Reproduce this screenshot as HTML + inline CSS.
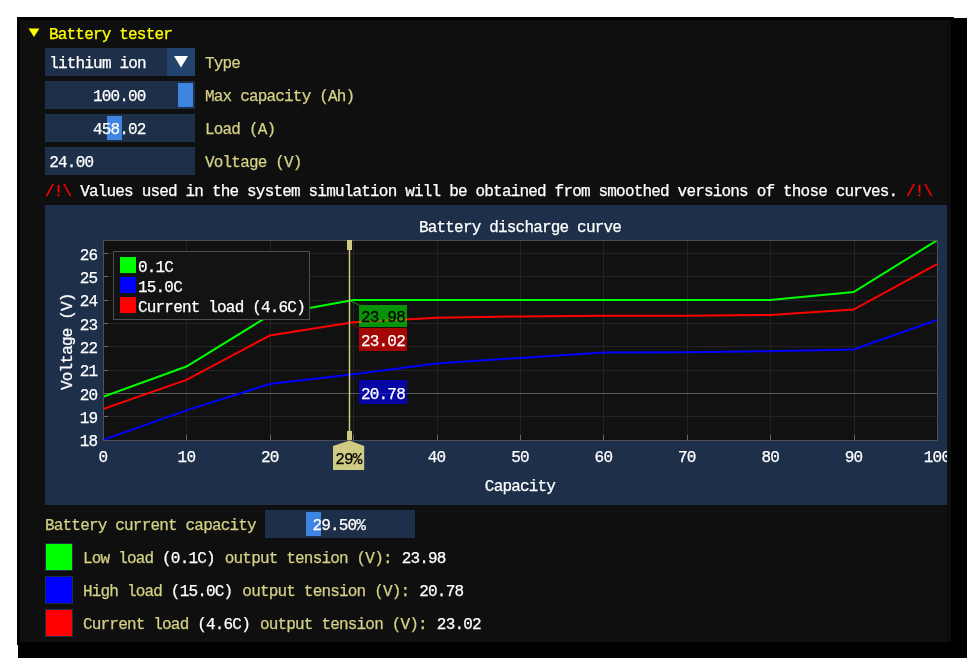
<!DOCTYPE html>
<html><head><meta charset="utf-8"><style>
html,body{margin:0;padding:0;background:#fff;width:971px;height:662px;overflow:hidden}
svg{display:block;will-change:transform}
text{font-family:"Liberation Mono",monospace;font-size:16px;letter-spacing:-0.815px;white-space:pre;stroke-width:0.25px}
</style></head><body>
<svg width="971" height="662" viewBox="0 0 971 662">
<rect x="0" y="0" width="971" height="662" fill="#ffffff" />
<rect x="18" y="18" width="949" height="640" fill="#000000" />
<rect x="17" y="17" width="937" height="628" fill="#000000" />
<rect x="20" y="20" width="931" height="622" fill="#0f0f0f" />
<rect x="947" y="20" width="4" height="622" fill="#0d0d0d" />
<polygon points="28.50,28.50 39.40,28.50 34.00,37.00" fill="#ffff00" />
<text x="49.00" y="39.20" fill="#ffff00" stroke="#ffff00" >Battery tester</text>
<rect x="45" y="48" width="122" height="28" fill="#1e2f4a" />
<rect x="167" y="48" width="28" height="28" fill="#23456d" />
<polygon points="174.00,56.00 188.00,56.00 181.00,67.50" fill="#ffffff" />
<text x="49.20" y="68.30" fill="#ffffff" stroke="#ffffff" >lithium ion</text>
<text x="205.00" y="68.30" fill="#d4d086" stroke="#d4d086" >Type</text>
<rect x="45" y="81" width="150" height="28" fill="#1e2f4a" />
<rect x="178" y="83" width="15" height="24" fill="#3d85e0" />
<text x="92.94" y="101.30" fill="#ffffff" stroke="#ffffff" >100.00</text>
<text x="205.00" y="101.30" fill="#d4d086" stroke="#d4d086" >Max capacity (Ah)</text>
<rect x="45" y="114" width="150" height="28" fill="#1e2f4a" />
<rect x="107" y="116" width="15" height="24" fill="#3d85e0" />
<text x="92.94" y="134.30" fill="#ffffff" stroke="#ffffff" >458.02</text>
<text x="205.00" y="134.30" fill="#d4d086" stroke="#d4d086" >Load (A)</text>
<rect x="45" y="147" width="150" height="28" fill="#1e2f4a" />
<text x="49.30" y="167.30" fill="#ffffff" stroke="#ffffff" >24.00</text>
<text x="205.00" y="167.30" fill="#d4d086" stroke="#d4d086" >Voltage (V)</text>
<text x="45.00" y="196.30" fill="#ff0000" stroke="#ff0000" >/!\</text>
<text x="80.14" y="196.30" fill="#ffffff" stroke="#ffffff" >Values used in the system simulation will be obtained from smoothed versions of those curves.</text>
<text x="906.03" y="196.30" fill="#ff0000" stroke="#ff0000" >/!\</text>
<rect x="45" y="205" width="902" height="300" fill="#1e2f4a" />
<rect x="103" y="240" width="834" height="200" fill="#111111" />
<line x1="186.5" y1="240" x2="186.5" y2="440" stroke="#232323" stroke-width="1"/>
<line x1="270.5" y1="240" x2="270.5" y2="440" stroke="#232323" stroke-width="1"/>
<line x1="353.5" y1="240" x2="353.5" y2="440" stroke="#232323" stroke-width="1"/>
<line x1="437.5" y1="240" x2="437.5" y2="440" stroke="#232323" stroke-width="1"/>
<line x1="520.5" y1="240" x2="520.5" y2="440" stroke="#232323" stroke-width="1"/>
<line x1="603.5" y1="240" x2="603.5" y2="440" stroke="#232323" stroke-width="1"/>
<line x1="687.5" y1="240" x2="687.5" y2="440" stroke="#232323" stroke-width="1"/>
<line x1="770.5" y1="240" x2="770.5" y2="440" stroke="#232323" stroke-width="1"/>
<line x1="854.5" y1="240" x2="854.5" y2="440" stroke="#232323" stroke-width="1"/>
<line x1="103" y1="416.5" x2="937" y2="416.5" stroke="#232323" stroke-width="1"/>
<line x1="103" y1="393.5" x2="937" y2="393.5" stroke="#232323" stroke-width="1"/>
<line x1="103" y1="370.5" x2="937" y2="370.5" stroke="#232323" stroke-width="1"/>
<line x1="103" y1="346.5" x2="937" y2="346.5" stroke="#232323" stroke-width="1"/>
<line x1="103" y1="323.5" x2="937" y2="323.5" stroke="#232323" stroke-width="1"/>
<line x1="103" y1="300.5" x2="937" y2="300.5" stroke="#232323" stroke-width="1"/>
<line x1="103" y1="276.5" x2="937" y2="276.5" stroke="#232323" stroke-width="1"/>
<line x1="103" y1="253.5" x2="937" y2="253.5" stroke="#232323" stroke-width="1"/>
<line x1="103" y1="393.5" x2="937" y2="393.5" stroke="#5a5a5a" stroke-width="1"/>
<line x1="103.5" y1="435" x2="103.5" y2="440" stroke="#6a6a6a" stroke-width="1"/>
<line x1="186.5" y1="435" x2="186.5" y2="440" stroke="#6a6a6a" stroke-width="1"/>
<line x1="270.5" y1="435" x2="270.5" y2="440" stroke="#6a6a6a" stroke-width="1"/>
<line x1="353.5" y1="435" x2="353.5" y2="440" stroke="#6a6a6a" stroke-width="1"/>
<line x1="437.5" y1="435" x2="437.5" y2="440" stroke="#6a6a6a" stroke-width="1"/>
<line x1="520.5" y1="435" x2="520.5" y2="440" stroke="#6a6a6a" stroke-width="1"/>
<line x1="603.5" y1="435" x2="603.5" y2="440" stroke="#6a6a6a" stroke-width="1"/>
<line x1="687.5" y1="435" x2="687.5" y2="440" stroke="#6a6a6a" stroke-width="1"/>
<line x1="770.5" y1="435" x2="770.5" y2="440" stroke="#6a6a6a" stroke-width="1"/>
<line x1="854.5" y1="435" x2="854.5" y2="440" stroke="#6a6a6a" stroke-width="1"/>
<line x1="937.5" y1="435" x2="937.5" y2="440" stroke="#6a6a6a" stroke-width="1"/>
<line x1="103" y1="440.5" x2="108" y2="440.5" stroke="#6a6a6a" stroke-width="1"/>
<line x1="103" y1="416.5" x2="108" y2="416.5" stroke="#6a6a6a" stroke-width="1"/>
<line x1="103" y1="393.5" x2="108" y2="393.5" stroke="#6a6a6a" stroke-width="1"/>
<line x1="103" y1="370.5" x2="108" y2="370.5" stroke="#6a6a6a" stroke-width="1"/>
<line x1="103" y1="346.5" x2="108" y2="346.5" stroke="#6a6a6a" stroke-width="1"/>
<line x1="103" y1="323.5" x2="108" y2="323.5" stroke="#6a6a6a" stroke-width="1"/>
<line x1="103" y1="300.5" x2="108" y2="300.5" stroke="#6a6a6a" stroke-width="1"/>
<line x1="103" y1="276.5" x2="108" y2="276.5" stroke="#6a6a6a" stroke-width="1"/>
<line x1="103" y1="253.5" x2="108" y2="253.5" stroke="#6a6a6a" stroke-width="1"/>
<clipPath id="pc"><rect x="103" y="240" width="834" height="200"/></clipPath>
<g clip-path="url(#pc)">
<polyline points="103.00,440.00 186.40,410.38 269.80,384.02 353.20,374.22 436.60,363.49 520.00,357.90 603.40,352.53 686.80,352.30 770.20,351.13 853.60,349.50 937.00,319.88" fill="none" stroke="#0000ff" stroke-width="2" stroke-linejoin="miter"/>
<polyline points="103.00,408.98 186.40,379.82 269.80,335.50 353.20,322.21 436.60,317.78 520.00,316.38 603.40,315.68 686.80,315.68 770.20,314.98 853.60,309.61 937.00,264.13" fill="none" stroke="#ff0000" stroke-width="2" stroke-linejoin="miter"/>
<polyline points="103.00,396.85 186.40,366.53 269.80,315.21 353.20,300.05 436.60,300.05 520.00,300.05 603.40,300.05 686.80,300.05 770.20,300.05 853.60,292.12 937.00,240.34" fill="none" stroke="#00ff00" stroke-width="2" stroke-linejoin="miter"/>
</g>
<rect x="103.5" y="240.5" width="834" height="200" fill="none" stroke="#4f4f59" stroke-width="1"/>
<rect x="113.5" y="251.5" width="196" height="68" fill="#131313" stroke="#4e4e56" stroke-width="1"/>
<rect x="120" y="257" width="16" height="16" fill="#00ff00" />
<text x="138.00" y="271.50" fill="#ffffff" stroke="#ffffff" >0.1C</text>
<rect x="120" y="277" width="16" height="16" fill="#0000ff" />
<text x="138.00" y="291.50" fill="#ffffff" stroke="#ffffff" >15.0C</text>
<rect x="120" y="297" width="16" height="16" fill="#ff0000" />
<text x="138.00" y="311.50" fill="#ffffff" stroke="#ffffff" >Current load (4.6C)</text>
<line x1="349.5" y1="300.5" x2="359" y2="305" stroke="#00a000" stroke-width="1"/>
<line x1="349.5" y1="323" x2="359" y2="328" stroke="#a00000" stroke-width="1"/>
<line x1="349.5" y1="374.5" x2="359" y2="380" stroke="#0000a0" stroke-width="1"/>
<rect x="359" y="305" width="48" height="22" fill="rgba(0,255,0,0.55)" />
<rect x="359" y="328" width="48" height="23" fill="rgba(255,0,0,0.62)" />
<rect x="359" y="380" width="48" height="24" fill="rgba(0,0,255,0.62)" />
<text x="361.00" y="322.30" fill="#000000" stroke="#000000" >23.98</text>
<text x="361.00" y="345.50" fill="#ffffff" stroke="#ffffff" >23.02</text>
<text x="361.00" y="398.50" fill="#ffffff" stroke="#ffffff" >20.78</text>
<text x="418.96" y="231.50" fill="#ffffff" stroke="#ffffff" >Battery discharge curve</text>
<text x="484.86" y="491.30" fill="#ffffff" stroke="#ffffff" >Capacity</text>
<clipPath id="fc"><rect x="45" y="205" width="902" height="300"/></clipPath><g clip-path="url(#fc)">
<text x="98.61" y="462.40" fill="#ffffff" stroke="#ffffff" >0</text>
<text x="177.61" y="462.40" fill="#ffffff" stroke="#ffffff" >10</text>
<text x="261.01" y="462.40" fill="#ffffff" stroke="#ffffff" >20</text>
<text x="344.41" y="462.40" fill="#ffffff" stroke="#ffffff" >30</text>
<text x="427.81" y="462.40" fill="#ffffff" stroke="#ffffff" >40</text>
<text x="511.21" y="462.40" fill="#ffffff" stroke="#ffffff" >50</text>
<text x="594.61" y="462.40" fill="#ffffff" stroke="#ffffff" >60</text>
<text x="678.01" y="462.40" fill="#ffffff" stroke="#ffffff" >70</text>
<text x="761.41" y="462.40" fill="#ffffff" stroke="#ffffff" >80</text>
<text x="844.81" y="462.40" fill="#ffffff" stroke="#ffffff" >90</text>
<text x="923.82" y="462.40" fill="#ffffff" stroke="#ffffff" >100</text>
</g>
<text x="79.63" y="446.20" fill="#ffffff" stroke="#ffffff" >18</text>
<text x="79.63" y="422.88" fill="#ffffff" stroke="#ffffff" >19</text>
<text x="79.63" y="399.55" fill="#ffffff" stroke="#ffffff" >20</text>
<text x="79.63" y="376.22" fill="#ffffff" stroke="#ffffff" >21</text>
<text x="79.63" y="352.90" fill="#ffffff" stroke="#ffffff" >22</text>
<text x="79.63" y="329.57" fill="#ffffff" stroke="#ffffff" >23</text>
<text x="79.63" y="306.25" fill="#ffffff" stroke="#ffffff" >24</text>
<text x="79.63" y="282.93" fill="#ffffff" stroke="#ffffff" >25</text>
<text x="79.63" y="259.60" fill="#ffffff" stroke="#ffffff" >26</text>
<text transform="translate(72,390) rotate(-90)" x="0" y="0" fill="#ffffff" stroke="#ffffff">Voltage (V)</text>
<rect x="348.75" y="240" width="1.5" height="200" fill="#cfcb83"/>
<rect x="347" y="240" width="5" height="10" fill="#cfcb83" />
<rect x="347" y="431" width="5" height="9" fill="#cfcb83" />
<polygon points="349.50,440.50 364.20,446.00 364.20,470.00 333.00,470.00 333.00,446.00" fill="#cfcb83" />
<text x="335.20" y="464.40" fill="#000000" stroke="#000000" >29%</text>
<text x="45.00" y="530.30" fill="#d4d086" stroke="#d4d086" >Battery current capacity</text>
<rect x="265" y="510" width="150" height="28" fill="#1e2f4a" />
<rect x="306" y="512" width="15" height="24" fill="#3d85e0" />
<text x="312.44" y="530.30" fill="#ffffff" stroke="#ffffff" >29.50%</text>
<rect x="45.5" y="543.5" width="27" height="27" fill="#00ff00" stroke="#1e2f4a" stroke-width="1"/>
<text x="83.00" y="563.30" fill="#d4d086" stroke="#d4d086" >Low load </text>
<text x="162.07" y="563.30" fill="#ffffff" stroke="#ffffff" >(0.1C)</text>
<text x="224.79" y="563.30" fill="#d4d086" stroke="#d4d086" >output tension (V):</text>
<text x="401.72" y="563.30" fill="#ffffff" stroke="#ffffff" >23.98</text>
<rect x="45.5" y="576.5" width="27" height="27" fill="#0000ff" stroke="#1e2f4a" stroke-width="1"/>
<text x="83.00" y="596.30" fill="#d4d086" stroke="#d4d086" >High load </text>
<text x="170.86" y="596.30" fill="#ffffff" stroke="#ffffff" >(15.0C)</text>
<text x="242.36" y="596.30" fill="#d4d086" stroke="#d4d086" >output tension (V):</text>
<text x="419.30" y="596.30" fill="#ffffff" stroke="#ffffff" >20.78</text>
<rect x="45.5" y="609.5" width="27" height="27" fill="#ff0000" stroke="#1e2f4a" stroke-width="1"/>
<text x="83.00" y="629.30" fill="#d4d086" stroke="#d4d086" >Current load </text>
<text x="197.22" y="629.30" fill="#ffffff" stroke="#ffffff" >(4.6C)</text>
<text x="259.93" y="629.30" fill="#d4d086" stroke="#d4d086" >output tension (V):</text>
<text x="436.87" y="629.30" fill="#ffffff" stroke="#ffffff" >23.02</text>
</svg>
</body></html>
